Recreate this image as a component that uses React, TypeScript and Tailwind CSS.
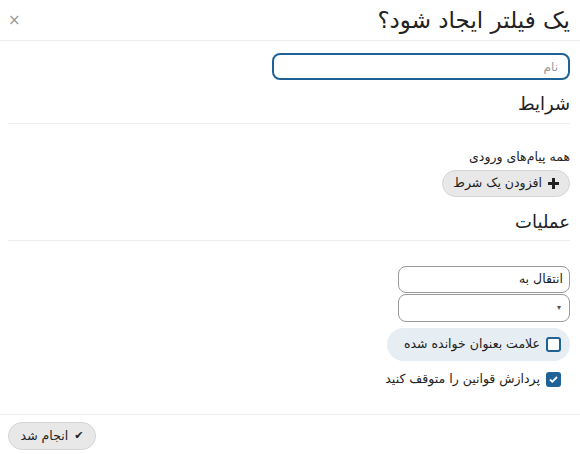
import React from 'react';

export default function App() {
  return (
    <div dir="rtl" className="w-[580px] h-[454px] bg-white text-[#222] overflow-hidden" style={{ fontFamily: '"DejaVu Sans", "Noto Sans", sans-serif' }}>
      {/* Header */}
      <div className="h-[41px] flex items-center justify-between pr-[10px] pl-[8px] border-b border-[#eeeeee]">
        <h1 className="text-[23px] leading-none">یک فیلتر ایجاد شود؟</h1>
        <span className="text-[#999] text-[15px] leading-none">×</span>
      </div>

      {/* Body */}
      <div className="pr-[10px] pl-[8px] pt-[12px]">
        <input
          placeholder="نام"
          className="block w-[298px] h-[27px] rounded-lg border-2 border-[#1f6396] px-[10px] text-[12px] placeholder:text-[#999] outline-none"
        />

        <h2 className="mt-[10px] text-[18px] leading-[28px] pb-[5px] border-b border-[#eeeeee]">شرایط</h2>

        <div className="mt-[23px] text-[12.5px] leading-[20px]">همه پیام‌های ورودی</div>
        <button className="mt-[3px] h-[27px] rounded-full bg-[#e8e8e8] border border-[#d5d5d5] flex items-center gap-[6px] px-[10px] text-[12.5px] whitespace-nowrap">
          <svg width="11" height="11" viewBox="0 0 11 11" className="shrink-0">
            <path d="M4 0h3v4h4v3H7v4H4V7H0V4h4z" fill="#222" />
          </svg>
          <span>افزودن یک شرط</span>
        </button>

        <h2 className="mt-[11px] text-[18px] leading-[28px] pb-[4px] border-b border-[#eeeeee]">عملیات</h2>

        <div className="mt-[25px] flex flex-col gap-[1px] w-[172px]">
          <div className="h-[27px] rounded-lg border border-[#999] flex items-center px-[6px] text-[12.5px]">
            <span>انتقال به</span>
          </div>
          <div className="h-[28px] rounded-lg border border-[#999] flex items-center px-[8px] text-[8px] text-[#555]">
            <span>▾</span>
          </div>
        </div>

        <div className="mt-[6px] w-[183px] h-[33px] rounded-full bg-[#e6edf3] flex items-center gap-[6px] px-[9px] text-[12.5px] whitespace-nowrap">
          <span className="w-[15px] h-[15px] rounded-[3px] border-2 border-[#1f6396] bg-white shrink-0" />
          <span>علامت بعنوان خوانده شده</span>
        </div>

        <div className="mt-[9px] h-[18px] flex items-center gap-[6px] pr-[9px] text-[12.5px] whitespace-nowrap">
          <span className="w-[15px] h-[15px] rounded-[3px] bg-[#1f6396] flex items-center justify-center shrink-0">
            <svg width="11" height="11" viewBox="0 0 11 11">
              <path d="M2 5.5l2.3 2.3L9 3" stroke="white" strokeWidth="1.8" fill="none" />
            </svg>
          </span>
          <span>پردازش قوانین را متوقف کنید</span>
        </div>
      </div>

      {/* Footer */}
      <div className="mt-[26px] border-t border-[#eeeeee] pt-[7px] pl-[8px] flex justify-end">
        <button className="h-[28px] w-[88px] rounded-full bg-[#e8e8e8] border border-[#d5d5d5] flex items-center justify-center gap-[6px] text-[12.5px]">
          <span className="text-[11px]">✔</span>
          <span>انجام شد</span>
        </button>
      </div>
    </div>
  );
}
